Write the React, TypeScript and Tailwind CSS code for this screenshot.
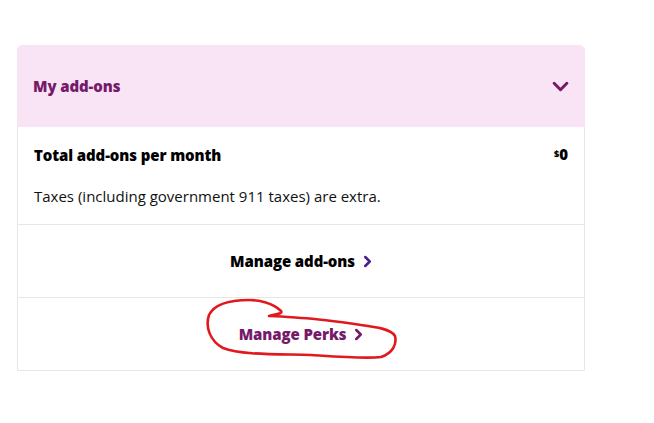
import React from 'react';

const Chevron = ({ className }: { className?: string }) => (
  <svg viewBox="0 0 10 14" className={className} fill="none">
    <path d="M2.5 2l5 5-5 5" stroke="currentColor" strokeWidth="2.8" strokeLinecap="round" strokeLinejoin="round" />
  </svg>
);

export default function App() {
  return (
    <div className="min-h-screen bg-white pt-[45px] pl-[17px]" style={{ fontFamily: '"Open Sans", sans-serif' }}>
      <div className="w-[568px] border border-[#e6e6e6] rounded-t-[6px] relative">
        {/* header */}
        <div className="h-[82px] bg-[#f9e4f5] rounded-t-[6px] flex items-center justify-between pl-[16px] pr-[16px] -m-px mb-0">
          <span className="text-[15px] font-extrabold text-[#751a6a] tracking-[-0.1px]">My add-ons</span>
          <svg viewBox="0 0 16 10" className="w-[17px] h-[11px] text-[#751a6a]" fill="none">
            <path d="M2 2l6 6 6-6" stroke="currentColor" strokeWidth="2.8" strokeLinecap="round" strokeLinejoin="round" />
          </svg>
        </div>

        {/* totals */}
        <div className="px-[16px] pt-[17px] pb-[17px] border-b border-[#e6e6e6]">
          <div className="flex justify-between items-start">
            <span className="text-[15px] font-extrabold text-black tracking-[-0.1px] leading-[22px]">Total add-ons per month</span>
            <span className="text-[15px] font-extrabold text-black leading-none mt-[3px]">
              <sup className="text-[9px] relative -top-[3px]">$</sup>0
            </span>
          </div>
          <p className="mt-[19px] text-[15px] text-[#111] leading-[22px]">Taxes (including government 911 taxes) are extra.</p>
        </div>

        {/* manage add-ons */}
        <div className="h-[73px] flex items-center justify-center border-b border-[#e6e6e6]">
          <span className="flex items-center gap-[8px] text-[15px] font-extrabold text-black tracking-[-0.1px]">
            Manage add-ons
            <Chevron className="w-[9px] h-[13px] text-[#4b1f8f]" />
          </span>
        </div>

        {/* manage perks */}
        <div className="h-[72px] flex items-center justify-center">
          <span className="flex items-center gap-[8px] text-[15px] font-extrabold text-[#751a6a] tracking-[-0.1px]">
            Manage Perks
            <Chevron className="w-[9px] h-[13px] text-[#751a6a]" />
          </span>
        </div>

        {/* hand-drawn annotation */}
        <svg className="absolute left-0 top-0 pointer-events-none" width="568" height="330" viewBox="17 45 568 330" fill="none">
          <path
            d="M268 315 C275 313 282 313 280 310 C272 302 258 299 248 299 C232 299 214 302 208 314 C204 326 209 340 222 347 C240 354 275 353 310 354 C340 356 365 358 380 356 C392 352 396 343 394 335 C390 328 375 326 360 324 C340 321 320 318 300 317 C285 316 275 315 268 315"
            stroke="#e0191e"
            strokeWidth="2.6"
            strokeLinecap="round"
            strokeLinejoin="round"
          />
        </svg>
      </div>
    </div>
  );
}
